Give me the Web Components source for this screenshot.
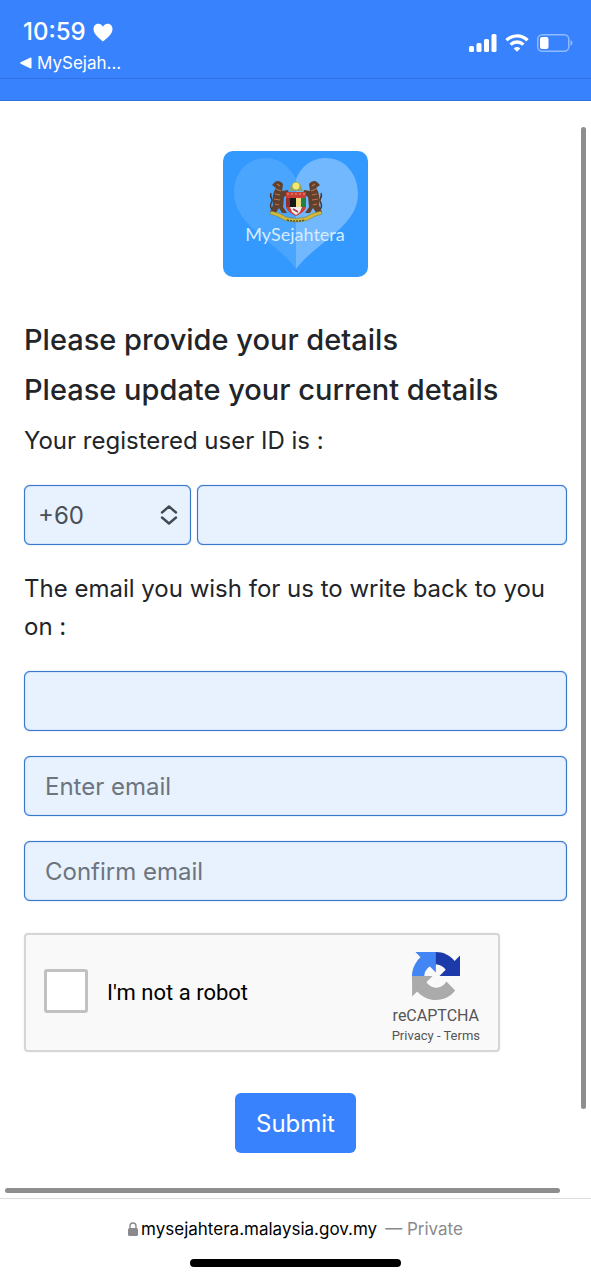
<!DOCTYPE html>
<html lang="en">
<head>
<meta charset="utf-8">
<meta name="viewport" content="width=device-width, initial-scale=1">
<title>MySejahtera</title>
<style>
  body { margin: 0; background: #fff; font-family: Inter, "Liberation Sans", sans-serif; color: #212529; }
</style>
</head>
<body>
<phone-page>
  <status-bar slot="top" time="10:59" back="MySejah..."></status-bar>
  <app-logo></app-logo>
  <details-form></details-form>
  <address-bar slot="bottom" host="mysejahtera.malaysia.gov.my" mode="Private"></address-bar>
</phone-page>

<script>
class Base extends HTMLElement {
  connectedCallback() {
    if (this.shadowRoot) return;
    const t = document.createElement('template');
    t.innerHTML = '<style>*{box-sizing:border-box}:host{display:block}</style>' + this.render();
    this.attachShadow({ mode: 'open' }).append(t.content.cloneNode(true));
  }
}

customElements.define('phone-page', class extends Base {
  render() {
    return `
<style>
  :host { display: flex; flex-direction: column; min-height: 100vh; }
  main { position: relative; flex: 1; padding: 50px 24px 44px; }
  .v, .h { position: absolute; border-radius: 3px; background: #8e8e8e; }
  .v { top: 26px; right: 5px; bottom: 89px; width: 5px; }
  .h { left: 5px; right: 31px; bottom: 5px; height: 5px; }
</style>
<slot name="top"></slot>
<main><slot></slot><div class="v"></div><div class="h"></div></main>
<slot name="bottom"></slot>`;
  }
});

customElements.define('status-bar', class extends Base {
  render() {
    return `
<style>
  :host { background: #3982fd; color: #fff; }
  .row { display: flex; justify-content: space-between; height: 79px; padding: 16px 18px 0 20px; border-bottom: 1px solid #3171df; }
  .time { display: flex; align-items: center; gap: 7px; padding-left: 3px; font-size: 24px; line-height: 32px; font-weight: 500; }
  a { display: flex; align-items: center; gap: 5px; color: #fff; text-decoration: none; font-size: 17px; line-height: 30px; }
  .icons { display: flex; align-items: center; gap: 8px; height: 54px; }
  .rest { height: 22px; border-bottom: 1px solid #3171df; }
</style>
<div class="row">
  <div>
    <div class="time"><span>${this.getAttribute('time')}</span>
      <svg width="20" height="19" viewBox="0 0 20 19" fill="#fff"><path d="M10 18.500C8 16.500.5 12 .5 6 .5 2.500 3 .8 5.300.8c2 0 3.700 1 4.700 2.900C11 1.800 12.700.8 14.700.8c2.300 0 4.800 1.700 4.800 5.200 0 6-7.500 10.500-9.500 12.500z"/></svg>
    </div>
    <a href="#"><svg width="12" height="12" viewBox="0 0 12 12" fill="#fff"><path d="M.7 5.300 10.600.6q.9-.3.900.6v9.600q0 .9-.9.600L.7 6.700q-1-.7 0-1.400z"/></svg><span>${this.getAttribute('back')}</span></a>
  </div>
  <div class="icons">
    <svg width="28" height="18" viewBox="0 0 28 18" fill="#fff"><rect x="0" y="12" width="5" height="6" rx="1.500"/><rect x="7.500" y="9" width="5" height="9" rx="1.500"/><rect x="15" y="5" width="5" height="13" rx="1.500"/><rect x="22.500" y="0" width="5" height="18" rx="1.500"/></svg>
    <svg width="24" height="18" viewBox="0 0 24 18" fill="none" stroke="#fff" stroke-width="3.400"><path d="M1.500 6.200a15 15 0 0 1 21 0"/><path d="M5.600 10.600a9.200 9.200 0 0 1 12.800 0"/><path d="M12 17.800 8.700 14.400a4.700 4.700 0 0 1 6.600 0z" fill="#fff" stroke="none"/></svg>
    <svg width="36" height="18" viewBox="0 0 36 18"><rect x=".75" y=".75" width="31" height="16.500" rx="4.500" fill="none" stroke="#8fbaff" stroke-width="1.500"/><rect x="3" y="3" width="8.500" height="12" rx="2" fill="#fff"/><path d="M33.500 6q2 .8 2 3t-2 3z" fill="#8fbaff"/></svg>
  </div>
</div>
<div class="rest"></div>`;
  }
});

customElements.define('app-logo', class extends Base {
  render() {
    return `
<style>
  :host { display: flex; justify-content: center; margin-bottom: 45px; }
  text { font-family: Lato, sans-serif; font-weight: 400; font-size: 18px; }
</style>
<svg width="145" height="126" viewBox="0 0 145 126" role="img" aria-label="MySejahtera">
  <rect width="145" height="126" rx="10" fill="#3399fe"/>
  <path d="M73 28C65 13 54 7 43 7 25 7 11 21 11 42c0 33 44 50 62 76z" fill="#4aa5ff"/>
  <path d="M73 28C80 12 92 7 103 7c18 0 32 15 32 36 0 33-43 49-62 75z" fill="#71b8ff"/>
  <g id="tiger-left">
    <path d="M60 33c-2-3-6-4-8-2l-3 3 4 3c-3 4-4 10-3 17l-3 7 5 2 4-6 3 5h5l-4-6 1-10 5-3-1-4-6 1z" fill="#60402f"/>
    <path d="M49 58c-3-2-1-6 0-8s-3-4-1-8" fill="none" stroke="#4a342f" stroke-width="1.500"/>
    <path d="m53 38 5 2m-6 3 5 1m-6 4 6 1m-5 4 4 1M54 33l3 2" stroke="#bd753f" stroke-width="1.200"/>
  </g>
  <g id="tiger-right" transform="matrix(-1 0 0 1 146 0)">
    <path d="M60 33c-2-3-6-4-8-2l-3 3 4 3c-3 4-4 10-3 17l-3 7 5 2 4-6 3 5h5l-4-6 1-10 5-3-1-4-6 1z" fill="#60402f"/>
    <path d="M49 58c-3-2-1-6 0-8s-3-4-1-8" fill="none" stroke="#4a342f" stroke-width="1.500"/>
    <path d="m53 38 5 2m-6 3 5 1m-6 4 6 1m-5 4 4 1M54 33l3 2" stroke="#bd753f" stroke-width="1.200"/>
  </g>
  <g id="crest">
    <path d="m66 40 2-6q5-7 10 0l2 6z" fill="#8fa568"/><circle cx="73" cy="35" r="3.500" fill="#f5e86c"/>
    <path d="M63 41h20v14c0 5-6 8-10 10-4-2-10-5-10-10z" fill="#c93e35"/>
    <path d="M64 43h18" stroke="#e0a080" stroke-width="1.200" stroke-dasharray="2 2"/>
    <path d="M67 47h6v9h-6z" fill="#161717"/><path d="M73 47h5v9h-5z" fill="#efdc82"/><path d="M78 47h5v9h-5z" fill="#258047"/><path d="M63 47h4v9h-4z" fill="#932f35"/>
    <path d="M67 56h12l-2 5-4 3-4-3z" fill="#eef1f2"/><path d="m70 58 5 3" stroke="#bd3a4b" stroke-width="2"/>
    <path d="M48 60q10 2 15 6 10 3 20 0 5-4 15-6l1 3q-8 2-14 6-12 4-24 0-6-4-14-6z" fill="#d0b83c" stroke="#747733" stroke-width=".5"/>
    <path d="M64 69q9 2 18 0" stroke="#555b36" stroke-width="1.500" stroke-dasharray="2 1" fill="none"/>
  </g>
  <text x="72" y="90" text-anchor="middle" fill="#d6ebff">MySejahtera</text>
</svg>`;
  }
});

customElements.define('text-box', class extends Base {
  render() {
    const a = n => this.getAttribute(n) || '';
    return `
<style>
  input { display: block; width: 100%; height: 60px; padding: 0 20px; border: 1px solid #3b78c8; border-radius: 6px; box-shadow: 0 0 1px #3982fd, inset 0 0 1px #3982fd; background: #e8f1fe; color: #495057; font: 24px Inter, sans-serif; }
  input::placeholder { color: #6c757d; opacity: 1; }
</style>
<input type="${a('type')}" aria-label="${a('label')}" placeholder="${a('hint')}">`;
  }
});

customElements.define('code-select', class extends Base {
  render() {
    return `
<style>
  :host { display: grid; }
  select, svg { grid-area: 1 / 1; }
  select { appearance: none; width: 100%; height: 60px; padding: 0 13px; border: 1px solid #3b78c8; border-radius: 6px; box-shadow: 0 0 1px #3982fd, inset 0 0 1px #3982fd; background: #e8f1fe; color: #495057; font: 24px Inter, sans-serif; }
  svg { justify-self: end; align-self: center; margin-right: 13px; pointer-events: none; }
</style>
<select aria-label="Country code"><option>+60</option></select>
<svg width="18" height="20" viewBox="0 0 18 20" fill="none" stroke="#414a52" stroke-width="2.400" stroke-linecap="round" stroke-linejoin="round"><path d="m2 7.500 7-6 7 6M2 12.500l7 6 7-6"/></svg>`;
  }
});

customElements.define('robot-check', class extends Base {
  render() {
    return `
<style>
  :host { display: flex; align-items: center; width: 476px; max-width: 100%; height: 119px; padding: 0 18px; border: 2px solid #d6d6d6; border-radius: 4px; background: #f9f9f9; font-family: Roboto, sans-serif; box-shadow: 0 0 3px #0001; }
  label { flex: 1; display: flex; align-items: center; gap: 19px; font-size: 22px; color: #000; padding-bottom: 4px; }
  label span { padding-top: 4px; }
  input { appearance: none; width: 44px; height: 44px; margin: 0; border: 3px solid #c1c1c1; border-radius: 3px; background: #fff; }
  .brand { display: flex; flex-direction: column; align-items: center; padding-top: 12px; color: #555; }
  .name { font-size: 16px; line-height: 20px; margin-top: 6px; }
  .links { font-size: 13px; line-height: 20px; white-space: pre; }
  a { color: inherit; text-decoration: none; }
</style>
<label><input type="checkbox"><span>I'm not a robot</span></label>
<div class="brand">
  <svg width="48" height="48" viewBox="0 0 64 64"><path fill="#1c3aa9" d="M64 31.955l-.012-1.370V4.687l-7.160 7.160C50.968 4.674 42.033.093 32.029.093c-10.411 0-19.660 4.960-25.502 12.642l11.736 11.860a15.550 15.550 0 0 1 4.754-5.334c2.050-1.600 4.952-2.906 8.968-2.906.485 0 .860.057 1.135.163 4.976.393 9.288 3.140 11.828 7.124l-8.307 8.307z"/><path fill="#4285f4" d="M31.862.094l-1.370.012H4.594l7.160 7.160C4.580 13.127 0 22.060 0 32.065c0 10.411 4.960 19.660 12.642 25.502l11.860-11.736a15.550 15.550 0 0 1-5.334-4.754c-1.600-2.050-2.906-4.952-2.906-8.968 0-.485.057-.860.163-1.135.393-4.976 3.140-9.288 7.124-11.828l8.307 8.307z"/><path fill="#ababab" d="M.094 32.095l.012 1.370v25.898l7.160-7.160c5.860 7.173 14.794 11.754 24.798 11.754 10.411 0 19.660-4.960 25.502-12.642L45.830 39.455a15.550 15.550 0 0 1-4.754 5.334c-2.050 1.600-4.952 2.906-8.968 2.906-.485 0-.860-.057-1.135-.163-4.976-.393-9.288-3.140-11.828-7.124l8.307-8.307z"/></svg>
  <div class="name">reCAPTCHA</div>
  <div class="links"><a href="#">Privacy</a> - <a href="#">Terms</a></div>
</div>`;
  }
});

customElements.define('details-form', class extends Base {
  render() {
    return `
<style>
  h1 { margin: 0 0 14px; font-size: 29px; line-height: 36px; font-weight: 500; }
  p { margin: 0 0 25px; font-size: 24px; line-height: 38px; }
  .phone { display: grid; grid-template-columns: 167px 1fr; gap: 6px; margin-bottom: 25px; }
  .mails { display: grid; gap: 25px; margin-bottom: 32px; }
  button { display: block; height: 60px; margin: 41px auto 0; padding: 0 21px; border: 0; border-radius: 6px; background: #3982fd; color: #fff; font: 24px Inter, sans-serif; }
</style>
<form>
  <h1>Please provide your details</h1>
  <h1>Please update your current details</h1>
  <p>Your registered user ID is :</p>
  <div class="phone"><code-select></code-select><text-box type="tel" label="Phone number"></text-box></div>
  <p>The email you wish for us to write back to you on :</p>
  <div class="mails">
    <text-box type="email" label="Current email"></text-box>
    <text-box type="email" label="Enter email" hint="Enter email"></text-box>
    <text-box type="email" label="Confirm email" hint="Confirm email"></text-box>
  </div>
  <robot-check></robot-check>
  <button type="button">Submit</button>
</form>`;
  }
});

customElements.define('address-bar', class extends Base {
  render() {
    return `
<style>
  :host { border-top: 1px solid #dcdcdc; padding: 18px 0 13px; }
  .url { display: flex; justify-content: center; align-items: center; font-size: 17px; line-height: 24px; color: #8a8a8e; }
  svg { margin-right: 3px; }
  b { font-weight: 400; color: #000; margin-right: 8px; }
  .home { width: 211px; height: 8px; margin: 18px auto 0; border-radius: 4px; background: #000; }
</style>
<div class="url"><svg width="10" height="14" viewBox="0 0 10 14"><path d="M2 7V4a3 3 0 0 1 6 0v3" fill="none" stroke="#8a8a8e" stroke-width="1.400"/><rect y="6" width="10" height="8" rx="1.500" fill="#8a8a8e"/></svg><b>${this.getAttribute('host')}</b><span>— ${this.getAttribute('mode')}</span></div>
<div class="home"></div>`;
  }
});
</script>
</body>
</html>
